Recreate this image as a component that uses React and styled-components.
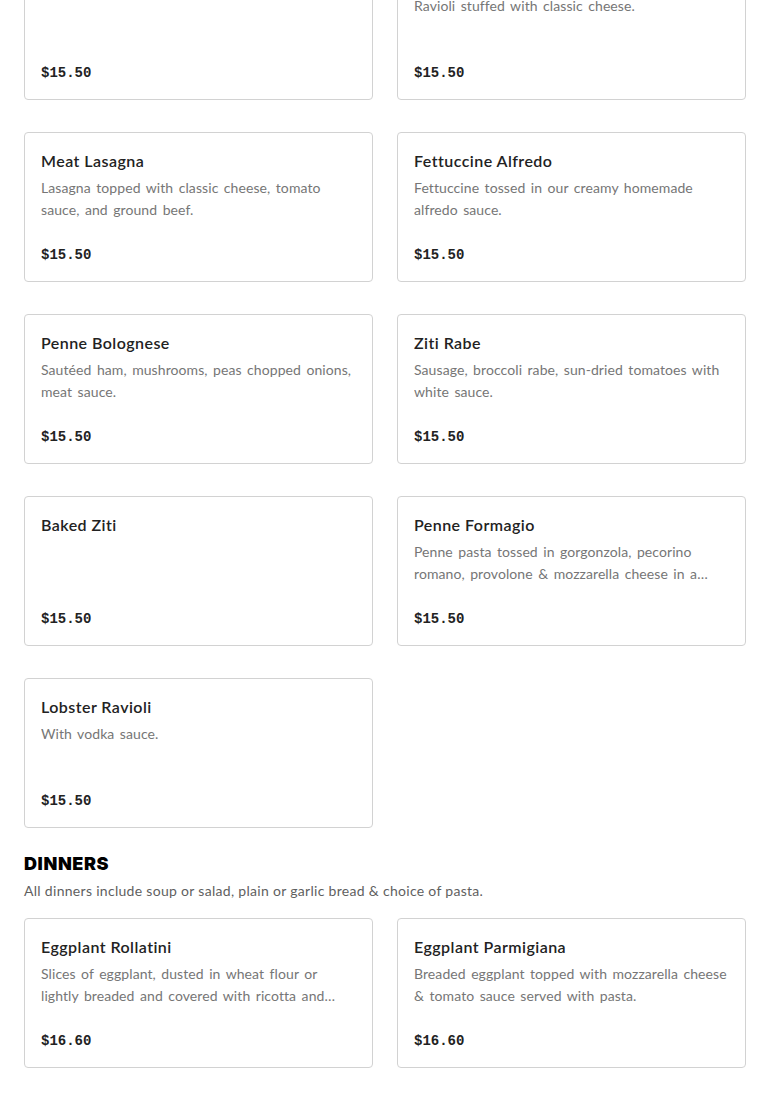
import React from "react";
import styled, { createGlobalStyle } from "styled-components";

const Global = createGlobalStyle`
  html, body { margin: 0; padding: 0; background: #fff; }
  body { font-family: Lato, "Noto Sans", Arial, sans-serif; overflow: hidden; }
`;

const Page = styled.main`
  padding: 0 24px;
  margin-top: -50px;
`;

const Section = styled.section`
  margin-bottom: 24px;
`;

const SectionTitle = styled.h2`
  margin: 0;
  font-family: Inter, Lato, sans-serif;
  font-size: 18px;
  line-height: 24px;
  font-weight: 900;
  letter-spacing: 0.6px;
  color: #000;
  text-transform: uppercase;
`;

const SectionNote = styled.p`
  margin: 4px 0 16px;
  font-size: 14px;
  line-height: 22px;
  letter-spacing: 0.3px;
  color: #5f5f5f;
`;

const Grid = styled.div`
  display: grid;
  grid-template-columns: 1fr 1fr;
  column-gap: 24px;
  row-gap: 32px;
`;

const Card = styled.article`
  height: 150px;
  box-sizing: border-box;
  border: 1px solid #d2d2d2;
  border-radius: 4px;
  padding: 16px;
  display: flex;
  flex-direction: column;
  background: #fff;
`;

const Title = styled.h3`
  margin: 0;
  font-size: 16px;
  line-height: 24px;
  font-weight: 600;
  letter-spacing: 0.45px;
  color: #222;
`;

const Desc = styled.p`
  margin: 4px 0 0;
  font-size: 14px;
  line-height: 22px;
  letter-spacing: 0.08px;
  word-spacing: 1.8px;
  color: #767676;
  display: -webkit-box;
  -webkit-line-clamp: 2;
  -webkit-box-orient: vertical;
  overflow: hidden;
`;

const Price = styled.div`
  margin-top: auto;
  font-family: "Liberation Mono", "DejaVu Sans Mono", monospace;
  font-weight: 700;
  font-size: 14px;
  line-height: 22px;
  color: #222;
  margin-bottom: -1px;
`;

const pasta = [
  { name: "Cheese Manicotti", desc: "", price: "$15.50" },
  { name: "Cheese Ravioli", desc: "Ravioli stuffed with classic cheese.", price: "$15.50" },
  { name: "Meat Lasagna", desc: "Lasagna topped with classic cheese, tomato sauce, and ground beef.", price: "$15.50" },
  { name: "Fettuccine Alfredo", desc: "Fettuccine tossed in our creamy homemade alfredo sauce.", price: "$15.50" },
  { name: "Penne Bolognese", desc: "Sautéed ham, mushrooms, peas chopped onions, meat sauce.", price: "$15.50" },
  { name: "Ziti Rabe", desc: "Sausage, broccoli rabe, sun-dried tomatoes with white sauce.", price: "$15.50" },
  { name: "Baked Ziti", desc: "", price: "$15.50" },
  { name: "Penne Formagio", desc: "Penne pasta tossed in gorgonzola, pecorino romano, provolone & mozzarella cheese in a creamy sauce.", price: "$15.50" },
  { name: "Lobster Ravioli", desc: "With vodka sauce.", price: "$15.50" },
];

const dinners = [
  { name: "Eggplant Rollatini", desc: "Slices of eggplant, dusted in wheat flour or lightly breaded and covered with ricotta and mozzarella cheese.", price: "$16.60" },
  { name: "Eggplant Parmigiana", desc: "Breaded eggplant topped with mozzarella cheese & tomato sauce served with pasta.", price: "$16.60" },
  { name: "Chicken Parmigiana", desc: "", price: "$16.60" },
  { name: "Chicken Marsala", desc: "", price: "$16.60" },
];

function Item({ item }) {
  return (
    <Card>
      <Title>{item.name}</Title>
      {item.desc && <Desc>{item.desc}</Desc>}
      <Price>{item.price}</Price>
    </Card>
  );
}

export default function App() {
  return (
    <>
      <Global />
      <Page>
        <Section>
          <Grid>
            {pasta.map((it) => (
              <Item key={it.name} item={it} />
            ))}
          </Grid>
        </Section>
        <Section>
          <SectionTitle>Dinners</SectionTitle>
          <SectionNote>All dinners include soup or salad, plain or garlic bread &amp; choice of pasta.</SectionNote>
          <Grid>
            {dinners.map((it) => (
              <Item key={it.name} item={it} />
            ))}
          </Grid>
        </Section>
      </Page>
    </>
  );
}
